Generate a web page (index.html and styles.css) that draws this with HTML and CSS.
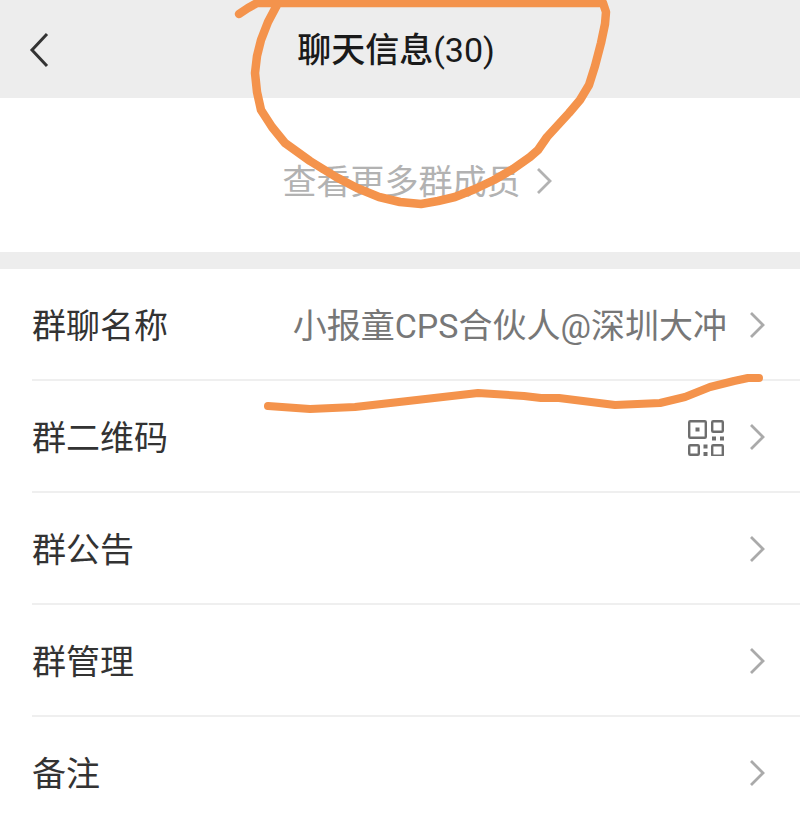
FILE: index.html
```html
<!DOCTYPE html>
<html lang="zh-CN">
<head>
<meta charset="UTF-8" />
<title>聊天信息</title>
<link rel="stylesheet" href="styles.css">
</head>
<body>

  <!-- Header -->
  <div class="header">
    <svg class="back" viewBox="0 0 20 36"><path d="M18 2 L3 18 L18 34" /></svg>
    <h1 class="title">聊天信息<span class="count">(30)</span></h1>
  </div>

  <!-- Members -->
  <div class="more">
    <span class="more-text">查看更多群成员</span>
    <svg class="arrow more-arrow" viewBox="0 0 16 28"><path d="M2 2 L14 14 L2 26" /></svg>
  </div>

  <!-- Settings -->
  <div class="list">
    <div class="row">
      <span class="label">群聊名称</span>
      <span class="value">小报童CPS合伙人@深圳大冲</span>
      <svg class="arrow" viewBox="0 0 16 28"><path d="M2 2 L14 14 L2 26" /></svg>
    </div>
    <div class="row">
      <span class="label">群二维码</span>
      <svg class="qr" viewBox="0 0 36 36">
        <rect x="1.2" y="1.2" width="16.6" height="16.6" rx="1" />
        <rect x="24.2" y="1.2" width="10.6" height="10.6" rx="1" />
        <rect x="1.2" y="25.2" width="9.6" height="9.6" rx="1" />
        <rect x="24.2" y="25.2" width="10.6" height="10.6" rx="1" />
        <rect class="dot" x="7.5" y="7.5" width="4" height="4" />
        <rect class="dot" x="24" y="16.5" width="4" height="4" />
        <rect class="dot" x="32" y="16.5" width="4" height="4" />
        <rect class="dot" x="15.5" y="24.5" width="4" height="4" />
        <rect class="dot" x="15.5" y="32" width="4" height="4" />
      </svg>
      <svg class="arrow" viewBox="0 0 16 28"><path d="M2 2 L14 14 L2 26" /></svg>
    </div>
    <div class="row">
      <span class="label">群公告</span>
      <svg class="arrow" viewBox="0 0 16 28"><path d="M2 2 L14 14 L2 26" /></svg>
    </div>
    <div class="row">
      <span class="label">群管理</span>
      <svg class="arrow" viewBox="0 0 16 28"><path d="M2 2 L14 14 L2 26" /></svg>
    </div>
    <div class="row">
      <span class="label">备注</span>
      <svg class="arrow" viewBox="0 0 16 28"><path d="M2 2 L14 14 L2 26" /></svg>
    </div>
  </div>

  <!-- Hand-drawn marks on top of the screenshot -->
  <svg class="marks" viewBox="0 0 800 824">
    <path class="circle" d="M239 14 L248 8 L257 3 L603 3 L606 12 L605 24 L601 43 L595 66 L589 85 L580 100 L569 113 L558 125 L547 137 L538 150 L530 157 L513 169 L494 180 L475 189 L455 197 L438 201 L421 204 L400 202 L379 197 L357 188 L336 177 L310 161 L285 143 L272 127 L261 110 L257 92 L255 73 L257 56 L261 40 L268 22 L277 5" />
    <path d="M268 406 L310 409 L355 407 L408 401 L478 393 L524 396 L541 398 L559 398 L615 405 L660 403 L685 397 L710 387 L734 381 L748 378 L759 378" />
  </svg>

</body>
</html>
```

FILE: styles.css
```css
* {
  margin: 0;
  padding: 0;
  box-sizing: border-box;
  font-family: Roboto, "Noto Sans CJK SC", sans-serif;
}

html, body {
  height: 824px;
  overflow: hidden;
}

body {
  position: relative;
  background-color: #ededed;
  color: #333;
}

/* Header */
.header {
  height: 98px;
  display: flex;
  align-items: center;
  justify-content: center;
  position: relative;
}

.back {
  position: absolute;
  left: 29px;
  top: 32px;
  width: 20px;
  height: 36px;
  fill: none;
  stroke: #333;
  stroke-width: 3;
}

.title {
  font-size: 34px;
  font-weight: 500;
  color: #1a1a1a;
  margin-left: -8px;
  margin-bottom: 4px;
}

.count {
  font-weight: 400;
}

/* Members */
.more {
  height: 154px;
  background-color: white;
  display: flex;
  align-items: center;
  justify-content: center;
  gap: 15px;
  color: #b2b2b2;
  font-size: 34px;
  padding-top: 10px;
  padding-left: 34px;
}

.more-text {
  margin-bottom: 2px;
}

/* Settings */
.list {
  margin-top: 17px;
  background-color: white;
  padding-left: 32px;
}

.row {
  height: 112px;
  display: flex;
  align-items: center;
  border-bottom: 2px solid #efefef;
  padding-right: 35px;
  font-size: 34px;
}

.label {
  flex: 1;
  color: #333;
  margin-bottom: 2px;
}

.value {
  color: #777;
  margin-right: 22px;
  margin-bottom: 2px;
}

.qr {
  width: 36px;
  height: 36px;
  margin-top: 3px;
  margin-right: 25px;
  fill: none;
  stroke: #6e6e6e;
  stroke-width: 2.4;
}

.qr .dot {
  fill: #6e6e6e;
  stroke: none;
}

.arrow {
  width: 16px;
  height: 28px;
  margin-top: 2px;
  fill: none;
  stroke: #aaa;
  stroke-width: 2.8;
}

.more-arrow {
  stroke: #b2b2b2;
}

/* Orange marks */
.marks {
  position: absolute;
  left: 0;
  top: 0;
  width: 800px;
  height: 824px;
  fill: none;
  stroke: #f4934c;
  stroke-width: 8;
  stroke-linecap: round;
  stroke-linejoin: round;
}

.marks .circle {
  stroke-width: 8.5;
}
```
